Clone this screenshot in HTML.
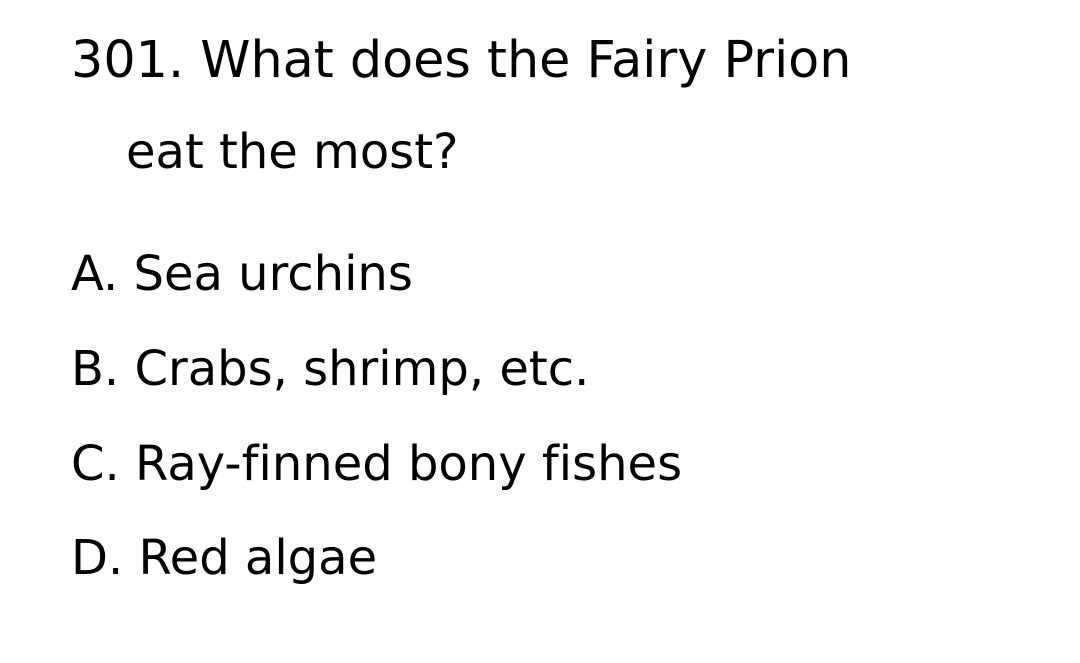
<!DOCTYPE html>
<html><head><style>
body{margin:0;background:#fff;width:1080px;height:663px;overflow:hidden;font-family:"DejaVu Sans","Liberation Sans",sans-serif;font-size:48px;color:#000;font-variant-ligatures:none;font-feature-settings:"liga" 0}
div{position:absolute;white-space:nowrap;line-height:1}
</style></head><body>
<div style="left:71px;top:35px;font-size:50.8px">301. What does the Fairy Prion</div>
<div style="left:126px;top:128px">eat the most?</div>
<div style="left:71px;top:250px">A. Sea urchins</div>
<div style="left:71px;top:345px">B. Crabs, shrimp, etc.</div>
<div style="left:71px;top:440px">C. Ray-finned bony fishes</div>
<div style="left:71px;top:534px">D. Red algae</div>
</body></html>
